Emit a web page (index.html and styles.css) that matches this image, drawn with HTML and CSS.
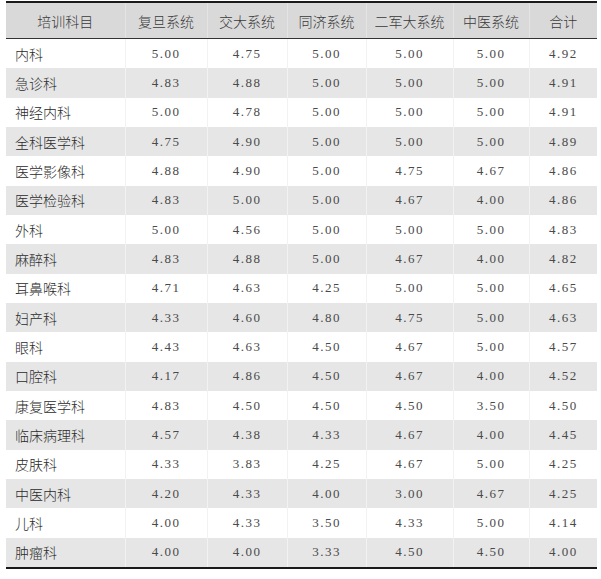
FILE: index.html
```html
<!DOCTYPE html>
<html lang="zh">
<head>
<meta charset="utf-8">
<link rel="stylesheet" href="styles.css">
</head>
<body>
<table class="grid">
  <colgroup>
    <col class="c0"><col class="c1"><col class="c2"><col class="c3"><col class="c4"><col class="c5"><col class="c6">
  </colgroup>
  <thead>
    <tr><th>培训科目</th><th>复旦系统</th><th>交大系统</th><th>同济系统</th><th>二军大系统</th><th>中医系统</th><th>合计</th></tr>
  </thead>
  <tbody>
    <tr><td class="name">内科</td><td>5.00</td><td>4.75</td><td>5.00</td><td>5.00</td><td>5.00</td><td>4.92</td></tr>
    <tr><td class="name">急诊科</td><td>4.83</td><td>4.88</td><td>5.00</td><td>5.00</td><td>5.00</td><td>4.91</td></tr>
    <tr><td class="name">神经内科</td><td>5.00</td><td>4.78</td><td>5.00</td><td>5.00</td><td>5.00</td><td>4.91</td></tr>
    <tr><td class="name">全科医学科</td><td>4.75</td><td>4.90</td><td>5.00</td><td>5.00</td><td>5.00</td><td>4.89</td></tr>
    <tr><td class="name">医学影像科</td><td>4.88</td><td>4.90</td><td>5.00</td><td>4.75</td><td>4.67</td><td>4.86</td></tr>
    <tr><td class="name">医学检验科</td><td>4.83</td><td>5.00</td><td>5.00</td><td>4.67</td><td>4.00</td><td>4.86</td></tr>
    <tr><td class="name">外科</td><td>5.00</td><td>4.56</td><td>5.00</td><td>5.00</td><td>5.00</td><td>4.83</td></tr>
    <tr><td class="name">麻醉科</td><td>4.83</td><td>4.88</td><td>5.00</td><td>4.67</td><td>4.00</td><td>4.82</td></tr>
    <tr><td class="name">耳鼻喉科</td><td>4.71</td><td>4.63</td><td>4.25</td><td>5.00</td><td>5.00</td><td>4.65</td></tr>
    <tr><td class="name">妇产科</td><td>4.33</td><td>4.60</td><td>4.80</td><td>4.75</td><td>5.00</td><td>4.63</td></tr>
    <tr><td class="name">眼科</td><td>4.43</td><td>4.63</td><td>4.50</td><td>4.67</td><td>5.00</td><td>4.57</td></tr>
    <tr><td class="name">口腔科</td><td>4.17</td><td>4.86</td><td>4.50</td><td>4.67</td><td>4.00</td><td>4.52</td></tr>
    <tr><td class="name">康复医学科</td><td>4.83</td><td>4.50</td><td>4.50</td><td>4.50</td><td>3.50</td><td>4.50</td></tr>
    <tr><td class="name">临床病理科</td><td>4.57</td><td>4.38</td><td>4.33</td><td>4.67</td><td>4.00</td><td>4.45</td></tr>
    <tr><td class="name">皮肤科</td><td>4.33</td><td>3.83</td><td>4.25</td><td>4.67</td><td>5.00</td><td>4.25</td></tr>
    <tr><td class="name">中医内科</td><td>4.20</td><td>4.33</td><td>4.00</td><td>3.00</td><td>4.67</td><td>4.25</td></tr>
    <tr><td class="name">儿科</td><td>4.00</td><td>4.33</td><td>3.50</td><td>4.33</td><td>5.00</td><td>4.14</td></tr>
    <tr><td class="name">肿瘤科</td><td>4.00</td><td>4.00</td><td>3.33</td><td>4.50</td><td>4.50</td><td>4.00</td></tr>
  </tbody>
</table>
</body>
</html>
```
FILE: styles.css
```css
html, body {
  margin: 0;
  padding: 0;
  background: #ffffff;
}

body {
  padding: 1px 0 0 6px;
}

.grid {
  width: 591px;
  table-layout: fixed;
  border-collapse: collapse;
  border-top: 2px solid #1a1a1a;
  border-bottom: 2px solid #1a1a1a;
}

.c0 { width: 119px; }
.c1 { width: 82px; }
.c2 { width: 80px; }
.c3 { width: 79px; }
.c4 { width: 87px; }
.c5 { width: 76px; }
.c6 { width: 68px; }

.grid th {
  height: 35px;
  padding: 0;
  background: #d9d9d9;
  border-bottom: 1px solid #333333;
  border-left: 1px solid #e4e4e4;
  font-family: "Noto Sans CJK SC", sans-serif;
  font-weight: 300;
  font-size: 14px;
  color: #3a3a3a;
  text-align: center;
  vertical-align: middle;
}

.grid th:first-child {
  border-left: none;
}

.grid td {
  height: 29.33px;
  padding: 0;
  border-left: 1px solid #f2f2f2;
  font-family: "Liberation Serif", serif;
  font-size: 13px;
  letter-spacing: 1.5px;
  color: #4a4a4a;
  text-align: center;
  vertical-align: middle;
}

.grid td:first-child {
  border-left: none;
}

.grid tbody tr:nth-child(even) td {
  background: #e6e6e6;
}

.grid td.name {
  padding-left: 9px;
  text-align: left;
  letter-spacing: 0;
  font-family: "Noto Sans CJK SC", sans-serif;
  font-weight: 300;
  font-size: 14px;
  color: #2a2a2a;
}
```
